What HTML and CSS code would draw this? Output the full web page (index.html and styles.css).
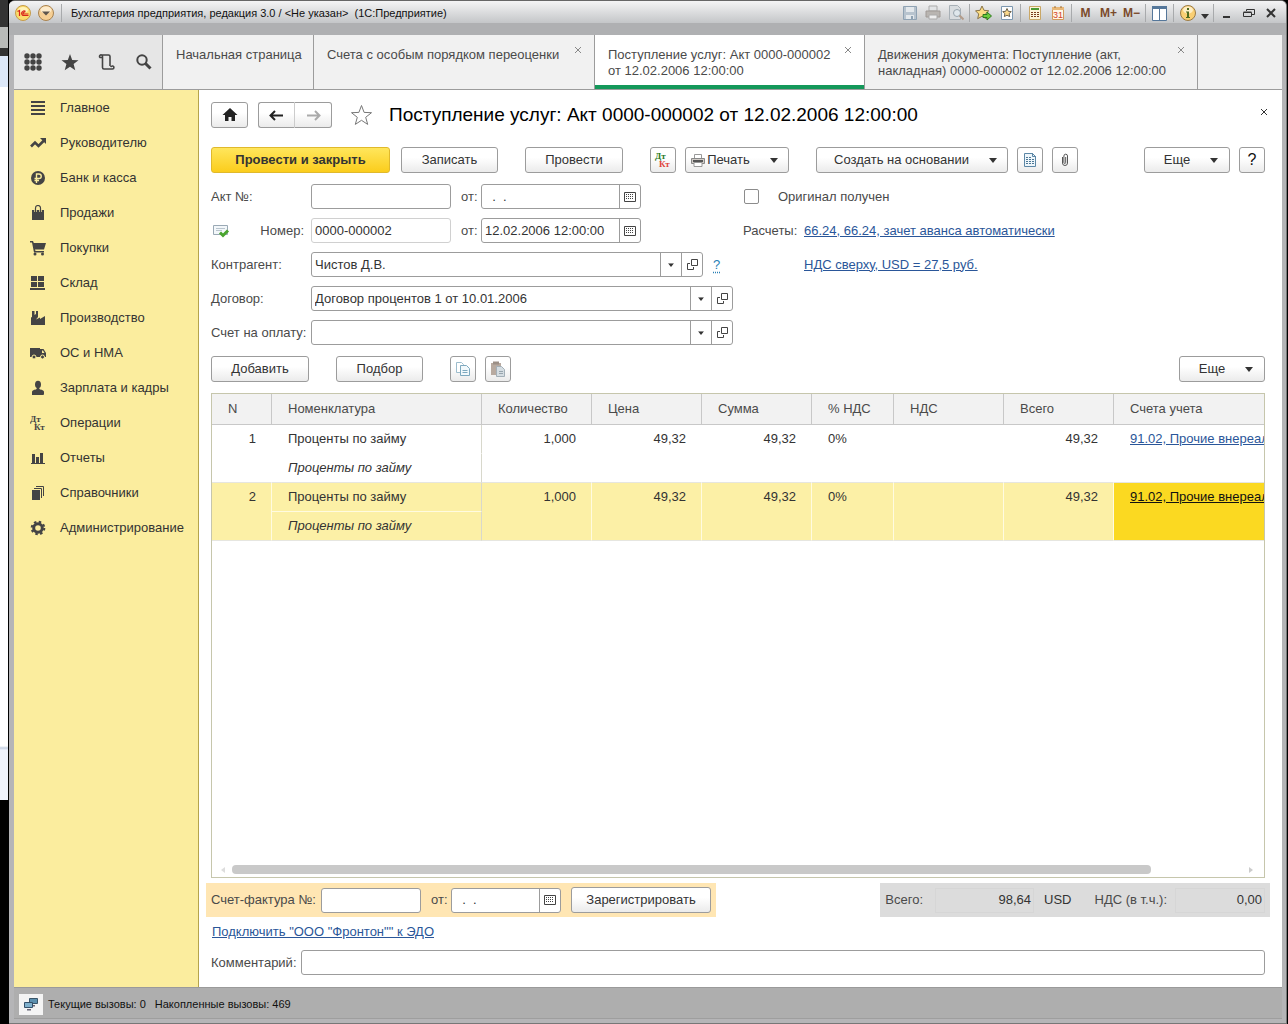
FILE: index.html
```html
<!DOCTYPE html>
<html lang="ru">
<head>
  <meta charset="UTF-8" />
  <meta name="viewport" content="width=device-width, initial-scale=1.0"/>
  <title>Поступление услуг: Акт 0000-000002</title>
  <link rel="stylesheet" href="styles.css">
</head>
<body>

  <!-- shared icons -->
  <svg class="defs" width="0" height="0">
    <symbol id="calendar" viewBox="0 0 12 10">
      <path d="M.5.5h11v9H.5z" fill="none" stroke="#444"/>
      <path d="M2 2.500h8M2 4.500h8M2 6.500h8" stroke="#444" stroke-dasharray="1 1" fill="none"/>
    </symbol>
    <symbol id="open" viewBox="0 0 11 11">
      <path d="M4.500.500h6v6h-6zM3 4.500H.500v6h6V8" fill="none" stroke="#444"/>
    </symbol>
    <symbol id="caret" viewBox="0 0 8 5"><path d="M0 0h8L4 5z" fill="#333"/></symbol>
    <symbol id="close" viewBox="0 0 8 8"><path d="M1 1l6 6M7 1L1 7" stroke="currentColor" fill="none"/></symbol>
  </svg>

  <div class="desktop">
    <div class="desktop-dark"></div>
    <div class="desktop-page"></div>
  </div>

  <div class="window">
    <header class="titlebar">
      <div class="titlebar-top">
        <svg class="app-logo" width="16" height="16" viewBox="0 0 16 16">
          <circle cx="8" cy="8" r="7.500" fill="#fbdc6c" stroke="#c49a4a"/>
          <ellipse cx="8" cy="5" rx="5" ry="3" fill="#fff3b8"/>
          <path d="M2.500 6.500L4.500 5.500V11M10.500 6.500A2.300 2.300 0 1 0 9 10.500H13.500M10 7.500A1 1 0 1 0 9 9H13.500" fill="none" stroke="#d8261c" stroke-width="1.200"/>
        </svg>
        <button class="round-menu" aria-label="Главное меню">
          <svg width="16" height="16" viewBox="0 0 16 16">
            <circle cx="8" cy="8" r="7.500" fill="#f6cf94" stroke="#a7824f"/>
            <ellipse cx="8" cy="5" rx="5.500" ry="3.500" fill="#fdebcb"/>
            <path d="M4 6.500h8l-4 4z" fill="#5d554c"/>
          </svg>
        </button>
        <span class="sep"></span>
        <div class="window-title">Бухгалтерия предприятия, редакция 3.0 / &lt;Не указан&gt;&nbsp; (1С:Предприятие)</div>
        <div class="title-tools">
          <button aria-label="Сохранить"><svg width="16" height="16" viewBox="0 0 16 16"><path d="M1.500 1.500h13v13h-13z" fill="#b7c3ce" stroke="#8fa2b3"/><path d="M4 2h8v5H4zM4 10h8v4H4z" fill="#e3e8ec"/><path d="M9 11h2v3H9z" fill="#8fa2b3"/></svg></button>
          <button aria-label="Печать"><svg width="16" height="16" viewBox="0 0 16 16"><path d="M4 1h8v5H4z" fill="#e2e4e6" stroke="#aaa"/><path d="M1 6h14v6H1z" fill="#b9b5b1" stroke="#a09a96"/><path d="M4 10h8v4H4z" fill="#eee" stroke="#aaa"/></svg></button>
          <button aria-label="Просмотр"><svg width="16" height="16" viewBox="0 0 16 16"><path d="M1.500.500h8l3 3v11h-11z" fill="#d9dde0" stroke="#a8b0b6"/><circle cx="9" cy="8" r="3.500" fill="#dfe7ec" stroke="#98a4ad"/><path d="M11.500 10.500l4 4" stroke="#b39c8a" stroke-width="2"/></svg></button>
          <span class="sep"></span>
          <button aria-label="Добавить в избранное"><svg width="17" height="16" viewBox="0 0 17 16"><path d="M7 1l2 4.300 4.800.500-3.500 3.200 1 4.700L7 11.300 2.700 13.700l1-4.700L.500 5.800 5 5.300z" fill="#fbdc83" stroke="#8a7448"/><path d="M8 9.500h4V7l4.500 4-4.500 4v-2.500H8z" fill="#6ccc3c" stroke="#2d7a1c"/></svg></button>
          <button aria-label="Избранное"><svg width="14" height="16" viewBox="0 0 14 16"><path d="M1.500 1.500h11v13h-11z" fill="#fdfdfd" stroke="#7d98b0"/><path d="M7 3.500l1.300 2.800 3 .300-2.200 2 .600 3L7 10.200l-2.700 1.400.600-3-2.200-2 3-.300z" fill="#fbd98b" stroke="#6f654e"/></svg></button>
          <span class="sep"></span>
          <button aria-label="Калькулятор"><svg width="14" height="16" viewBox="0 0 14 16"><path d="M1.500 1.500h11v13h-11z" fill="#fdf3d8" stroke="#c9a766"/><path d="M3 3h8v2H3z" fill="#4b9a34"/><path d="M3 7.500h8M3 9.500h8M3 11.500h8" stroke="#7a3b1d" stroke-dasharray="2 1"/></svg></button>
          <button aria-label="Календарь"><svg width="14" height="16" viewBox="0 0 14 16"><path d="M1.500 2.500h11v12h-11z" fill="#fff7e6" stroke="#d19a5a"/><path d="M1 2h12v3H1z" fill="#e9b878"/><path d="M4 1v2M10 1v2" stroke="#9b6a30"/><text x="7" y="13" class="cal-num">31</text></svg></button>
          <span class="sep"></span>
          <button class="mem">M</button>
          <button class="mem">M+</button>
          <button class="mem">M−</button>
          <span class="sep"></span>
          <button aria-label="Панели"><svg width="15" height="15" viewBox="0 0 15 15"><path d="M.500.500h14v14H.500z" fill="#fff" stroke="#55779a"/><path d="M0 0h15v3H0z" fill="#55779a"/><path d="M7.500 3v12" stroke="#55779a"/></svg></button>
          <span class="sep"></span>
          <button aria-label="О программе"><svg width="16" height="16" viewBox="0 0 16 16"><circle cx="8" cy="8" r="7.500" fill="#f9cf74" stroke="#9b7b45"/><ellipse cx="8" cy="5" rx="5" ry="3.500" fill="#feeec4"/><path d="M7 3h2v2H7zM6 6.500h3V12h1v1H6v-1h1V7.500H6z" fill="#4f6b1f"/></svg></button>
          <button class="narrow" aria-label="Ещё"><svg class="low" width="8" height="5"><use href="#caret"/></svg></button>
          <span class="sep"></span>
          <button class="win" aria-label="Свернуть"><svg width="12" height="12" viewBox="0 0 12 12"><path d="M2 9h7v2H2z" fill="#333"/></svg></button>
          <button class="win" aria-label="Восстановить"><svg width="12" height="12" viewBox="0 0 12 12"><path d="M3.500 4V2.500h8v5H9M.500 5.500h8v4h-8zM.500 5h8" fill="none" stroke="#333"/></svg></button>
          <button class="win" aria-label="Закрыть"><svg width="12" height="12" viewBox="0 0 12 12"><path d="M2 2l8 8M10 2l-8 8" stroke="#333" stroke-width="2"/></svg></button>
        </div>
      </div>
    </header>

    <div class="frame">
      <nav class="tabs">
        <div class="tab-tools">
          <button aria-label="Меню функций"><svg width="18" height="18" viewBox="0 0 18 18" fill="#444"><circle cx="3" cy="3" r="2.700"/><circle cx="9" cy="3" r="2.700"/><circle cx="15" cy="3" r="2.700"/><circle cx="3" cy="9" r="2.700"/><circle cx="9" cy="9" r="2.700"/><circle cx="15" cy="9" r="2.700"/><circle cx="3" cy="15" r="2.700"/><circle cx="9" cy="15" r="2.700"/><circle cx="15" cy="15" r="2.700"/></svg></button>
          <button aria-label="Избранное"><svg width="18" height="18" viewBox="0 0 18 18"><path d="M9 1l2.200 5.900 6.300.300-4.900 3.900 1.700 6.100L9 13.700l-5.300 3.500 1.700-6.100L.500 7.200l6.300-.300z" fill="#444"/></svg></button>
          <button aria-label="История"><svg width="18" height="18" viewBox="0 0 18 18"><path d="M4.500 6V3.500A1.500 1.500 0 1 0 2 4.500h2.500M3 2h7.500a1.500 1.500 0 0 1 1.500 1.500V13M4.500 6v8.500A1.500 1.500 0 0 0 6 16h8.500A1.500 1.500 0 1 0 13 14v-1" fill="none" stroke="#444" stroke-width="1.600"/></svg></button>
          <button aria-label="Поиск"><svg width="18" height="18" viewBox="0 0 18 18"><circle cx="7" cy="7" r="4.700" fill="none" stroke="#444" stroke-width="2"/><path d="M10.500 10.500l5 5" stroke="#444" stroke-width="3"/></svg></button>
        </div>
        <div class="tab tab-home">Начальная страница</div>
        <div class="tab tab-rates">Счета с особым порядком переоценки
          <button class="tab-close" aria-label="Закрыть"><svg width="8" height="8"><use href="#close"/></svg></button>
        </div>
        <div class="tab tab-act active">Поступление услуг: Акт 0000-000002<br>от 12.02.2006 12:00:00
          <button class="tab-close" aria-label="Закрыть"><svg width="8" height="8"><use href="#close"/></svg></button>
        </div>
        <div class="tab tab-moves">Движения документа: Поступление (акт,<br>накладная) 0000-000002 от 12.02.2006 12:00:00
          <button class="tab-close" aria-label="Закрыть"><svg width="8" height="8"><use href="#close"/></svg></button>
        </div>
      </nav>

      <div class="workspace">
        <aside class="sidebar">
          <a href="#"><svg viewBox="0 0 16 16"><path d="M1 1h14v2H1zM1 5h14v2H1zM1 9h14v2H1zM1 13h14v2H1z"/></svg>Главное</a>
          <a href="#"><svg viewBox="0 0 16 16"><path d="M1 11.500l4-4 3.500 3.500L14 5.500" fill="none" stroke="#444" stroke-width="2.600"/><path d="M10 3h6v6z"/></svg>Руководителю</a>
          <a href="#"><svg viewBox="0 0 16 16"><circle cx="8" cy="8" r="7"/><path d="M6.500 13V4H9a2.200 2.200 0 0 1 0 4.500H4.500M4.500 10.500H9" fill="none" stroke="#fbed9e" stroke-width="1.400"/></svg>Банк и касса</a>
          <a href="#"><svg viewBox="0 0 16 16"><path d="M2 5h12v10H2z"/><path d="M5.500 7V3.500a2.500 2.500 0 0 1 5 0V7" fill="none" stroke="#fbed9e" stroke-width="2.500"/><path d="M5.500 7V3a2.500 2.500 0 0 1 5 0v4" fill="none" stroke="#444" stroke-width="1.200"/></svg>Продажи</a>
          <a href="#"><svg viewBox="0 0 16 16"><path d="M0 1h3l.800 2H16l-2 6.500H5l.500 1.500H14v1.500H4L2 2.500H0z"/><circle cx="5" cy="14" r="1.500"/><circle cx="12.500" cy="14" r="1.500"/></svg>Покупки</a>
          <a href="#"><svg viewBox="0 0 16 16"><path d="M1 1h6v5H1zM8 1h6v5H8zM1 7h6v5H1zM8 7h6v5H8zM0 13h15v2H0z"/></svg>Склад</a>
          <a href="#"><svg viewBox="0 0 16 16"><path d="M1 15V7.500L2 7V1h2.500v4L6 4V1h2v6l-2 2.500 4-2V9l5-3v9z"/></svg>Производство</a>
          <a href="#"><svg viewBox="0 0 16 16"><path d="M0 3h10v9H0z"/><path d="M10 4h3.500L16 8v4h-6z"/><path d="M12 5.500h1L14.500 8H12z" fill="#fbed9e"/><circle cx="4" cy="12" r="2" stroke="#fbed9e"/><circle cx="12.500" cy="12" r="2" stroke="#fbed9e"/></svg>ОС и НМА</a>
          <a href="#"><svg viewBox="0 0 16 16"><ellipse cx="8" cy="4.500" rx="3" ry="3.800"/><path d="M2 15v-3q0-2 4-2.500l1-1.500h2l1 1.500q4 .500 4 2.500v2q0 1-1 1z"/></svg>Зарплата и кадры</a>
          <a href="#"><svg viewBox="0 0 16 16"><text x="0" y="7" class="dtkt">Дт</text><text x="4" y="15" class="dtkt">Кт</text></svg>Операции</a>
          <a href="#"><svg viewBox="0 0 16 16"><path d="M1 13h14v1H1zM2 4h3v9H2zM6 7h3v6H6zM10 3h3v10h-3z"/></svg>Отчеты</a>
          <a href="#"><svg viewBox="0 0 16 16"><path d="M2 5h8v10H2z"/><path d="M4 3.500h7.500V13M6 1.500h7.500V11" fill="none" stroke="#444"/></svg>Справочники</a>
          <a href="#"><svg viewBox="0 0 16 16"><circle cx="8" cy="8" r="4.300" fill="none" stroke="#444" stroke-width="3"/><circle cx="8" cy="8" r="6.300" fill="none" stroke="#444" stroke-width="2" stroke-dasharray="2.500 2.450"/></svg>Администрирование</a>
        </aside>

        <main class="content">
          <div class="heading">
            <button class="btn home" aria-label="Домой"><svg width="16" height="14" viewBox="0 0 16 14"><path d="M8 0l7.500 7H13v6H9.500V9h-3v4H3V7H.500z" fill="#222"/></svg></button>
            <div class="history">
              <button class="btn" aria-label="Назад"><svg width="15" height="11" viewBox="0 0 15 11"><path d="M14 5.500H2M6 1L1.500 5.500 6 10" fill="none" stroke="#222" stroke-width="2"/></svg></button>
              <button class="btn" aria-label="Вперед"><svg width="15" height="11" viewBox="0 0 15 11"><path d="M1 5.500h12M9 1l4.500 4.500L9 10" fill="none" stroke="#aaa" stroke-width="2"/></svg></button>
            </div>
            <button class="star" aria-label="В избранное"><svg width="23" height="22" viewBox="0 0 23 22"><path d="M11.500 1.500l2.600 6.900 7.400.300-5.800 4.600 2 7.100-6.200-4.100-6.200 4.100 2-7.100L1.500 8.700l7.400-.300z" fill="none" stroke="#777"/></svg></button>
            <h1>Поступление услуг: Акт 0000-000002 от 12.02.2006 12:00:00</h1>
            <button class="page-close" aria-label="Закрыть"><svg width="8" height="8"><use href="#close"/></svg></button>
          </div>

          <div class="toolbar">
            <div class="group">
              <button class="btn primary">Провести и закрыть</button>
              <button class="btn write">Записать</button>
            </div>
            <button class="btn medium">Провести</button>
            <div class="group">
              <button class="btn square" aria-label="Проводки"><svg width="18" height="18" viewBox="0 0 18 18"><text x="1" y="8" class="dtkt dt">Дт</text><text x="5" y="16" class="dtkt kt">Кт</text></svg></button>
              <button class="btn print"><svg width="14" height="13" viewBox="0 0 14 13"><path d="M3.500.500h7v4h-7z" fill="#fff" stroke="#999"/><path d="M.500 4.500h13v5H.500z" fill="#d0cbc6" stroke="#888"/><path d="M2 6h10v2H2z" fill="#555"/><path d="M3 8.500h8v4H3z" fill="#fff" stroke="#999"/></svg>Печать<svg class="caret" width="8" height="5"><use href="#caret"/></svg></button>
            </div>
            <div class="group">
              <button class="btn based">Создать на основании<svg class="caret" width="8" height="5"><use href="#caret"/></svg></button>
              <button class="btn square" aria-label="Отчет"><svg width="12" height="14" viewBox="0 0 12 14"><path d="M.500.500h8l3 3v10H.500z" fill="#eef6fb" stroke="#5c87a6"/><path d="M8.500 0v3.500H12" fill="none" stroke="#5c87a6"/><path d="M2 4.500h5M2 6.500h8M2 8.500h8M2 10.500h8" stroke="#4d7795" stroke-dasharray="2 1"/></svg></button>
              <button class="btn square" aria-label="Файлы"><svg width="8" height="14" viewBox="0 0 8 14"><path d="M1.500 4v6a2.500 2.500 0 0 0 5 0V3a1.800 1.800 0 0 0-3.600 0v6.500a.900.900 0 0 0 1.800 0V4" fill="none" stroke="#555"/></svg></button>
            </div>
            <div class="group right">
              <button class="btn more">Еще<svg class="caret" width="8" height="5"><use href="#caret"/></svg></button>
              <button class="btn square help">?</button>
            </div>
          </div>

          <div class="form">
            <div class="row">
              <div class="left">
                <label class="label" for="act">Акт №:</label>
                <input class="field number" type="text" id="act">
                <label class="from" for="act-date">от:</label>
                <div class="field date"><input type="text" id="act-date" value="  .  ."><button aria-label="Календарь"><svg width="12" height="10"><use href="#calendar"/></svg></button></div>
              </div>
              <input type="checkbox" id="original"><label for="original">Оригинал получен</label>
            </div>
            <div class="row">
              <div class="left">
                <label class="label with-icon" for="doc-number">
                  <svg width="17" height="14" viewBox="0 0 17 14"><path d="M.500 1.500h14v9H.500z" fill="#f3f7fa" stroke="#9aa9b5"/><path d="M3 4.500h9M3 6.500h6" stroke="#b9c5ce"/><path d="M7 8.500l3 3 5-5" fill="none" stroke="#4aa52e" stroke-width="3"/></svg>
                  Номер:</label>
                <input class="field number readonly" type="text" id="doc-number" value="0000-000002" readonly>
                <label class="from" for="doc-date">от:</label>
                <div class="field date"><input type="text" id="doc-date" value="12.02.2006 12:00:00"><button aria-label="Календарь"><svg width="12" height="10"><use href="#calendar"/></svg></button></div>
              </div>
              <span class="calc-label">Расчеты:</span>
              <a href="#">66.24, 66.24, зачет аванса автоматически</a>
            </div>
            <div class="row">
              <div class="left">
                <label class="label" for="partner">Контрагент:</label>
                <div class="field combo partner">
                  <select id="partner"><option>Чистов Д.В.</option></select>
                  <span class="arrow"><svg width="6" height="4" viewBox="0 0 8 5"><use href="#caret"/></svg></span>
                  <button aria-label="Открыть"><svg width="11" height="11"><use href="#open"/></svg></button>
                </div>
                <a class="hint" href="#">?</a>
              </div>
              <span class="calc-label"></span>
              <a href="#">НДС сверху, USD = 27,5 руб.</a>
            </div>
            <div class="row">
              <label class="label" for="contract">Договор:</label>
              <div class="field combo">
                <select id="contract"><option>Договор процентов 1 от 10.01.2006</option></select>
                <span class="arrow"><svg width="6" height="4" viewBox="0 0 8 5"><use href="#caret"/></svg></span>
                <button aria-label="Открыть"><svg width="11" height="11"><use href="#open"/></svg></button>
              </div>
            </div>
            <div class="row">
              <label class="label" for="bill">Счет на оплату:</label>
              <div class="field combo">
                <select id="bill"><option></option></select>
                <span class="arrow"><svg width="6" height="4" viewBox="0 0 8 5"><use href="#caret"/></svg></span>
                <button aria-label="Открыть"><svg width="11" height="11"><use href="#open"/></svg></button>
              </div>
            </div>
          </div>

          <div class="toolbar table-tools">
            <button class="btn medium">Добавить</button>
            <button class="btn pick">Подбор</button>
            <div class="group">
              <button class="btn square" aria-label="Копировать"><svg width="14" height="14" viewBox="0 0 14 14"><path d="M.500.500h5l2 2v8h-7z" fill="#fff" stroke="#9dbdcd"/><path d="M4.500 3.500h6l3 3v7h-9z" fill="#f2f9fc" stroke="#7ea9bf"/><path d="M6.500 8.500h5M6.500 10.500h5" stroke="#7ea9bf"/></svg></button>
              <button class="btn square" aria-label="Вставить"><svg width="16" height="16" viewBox="0 0 16 16"><path d="M1 2h10v12H1z" fill="#b8aaa0"/><path d="M3 .500h6v3H3z" fill="#9c8f86"/><path d="M6.500 5.500h5l3 3v7h-8z" fill="#d5dde2" stroke="#a3afb7"/><path d="M9 10.500h4M9 12.500h4" stroke="#98a5ae"/></svg></button>
            </div>
            <div class="group right"><button class="btn more">Еще<svg class="caret" width="8" height="5"><use href="#caret"/></svg></button></div>
          </div>

          <div class="grid">
            <table>
              <colgroup><col class="c-n"><col class="c-name"><col class="c-num"><col class="c-num"><col class="c-num"><col class="c-vat"><col class="c-num"><col class="c-num"><col></colgroup>
              <thead>
                <tr><th>N</th><th>Номенклатура</th><th>Количество</th><th>Цена</th><th>Сумма</th><th>% НДС</th><th>НДС</th><th>Всего</th><th>Счета учета</th></tr>
              </thead>
              <tbody>
                <tr>
                  <td class="num" rowspan="2">1</td><td class="name">Проценты по займу</td><td class="num" rowspan="2">1,000</td><td class="num" rowspan="2">49,32</td><td class="num" rowspan="2">49,32</td><td rowspan="2">0%</td><td rowspan="2"></td><td class="num" rowspan="2">49,32</td><td class="account" rowspan="2"><a href="#">91.02, Прочие внереал</a></td>
                </tr>
                <tr><td class="name full">Проценты по займу</td></tr>
              </tbody>
              <tbody class="selected">
                <tr>
                  <td class="num" rowspan="2">2</td><td class="name">Проценты по займу</td><td class="num" rowspan="2">1,000</td><td class="num" rowspan="2">49,32</td><td class="num" rowspan="2">49,32</td><td rowspan="2">0%</td><td rowspan="2"></td><td class="num" rowspan="2">49,32</td><td class="account current" rowspan="2"><a href="#">91.02, Прочие внереал</a></td>
                </tr>
                <tr><td class="name full">Проценты по займу</td></tr>
              </tbody>
            </table>
            <div class="scrollbar">
              <svg width="4" height="6" viewBox="0 0 4 6"><path d="M4 0v6L0 3z" fill="#ddd"/></svg>
              <div class="track"><div class="thumb"></div></div>
              <svg width="4" height="6" viewBox="0 0 4 6"><path d="M0 0v6l4-3z" fill="#ccc"/></svg>
            </div>
          </div>

          <div class="footer">
            <div class="invoice">
              <label for="invoice">Счет-фактура №:</label>
              <input class="field invoice-number" type="text" id="invoice">
              <label class="from" for="invoice-date">от:</label>
              <div class="field date short"><input type="text" id="invoice-date" value="  .  ."><button aria-label="Календарь"><svg width="12" height="10"><use href="#calendar"/></svg></button></div>
              <button class="btn register">Зарегистрировать</button>
            </div>
            <div class="totals">
              <label for="total">Всего:</label>
              <output class="total" id="total">98,64</output>
              <span class="currency">USD</span>
              <label for="vat">НДС (в т.ч.):</label>
              <output class="vat" id="vat">0,00</output>
            </div>
          </div>
          <div class="edo"><a href="#">Подключить "ООО "Фронтон"" к ЭДО</a></div>
          <div class="comment">
            <label for="comment">Комментарий:</label>
            <input class="field" type="text" id="comment">
          </div>
        </main>
      </div>
    </div>

    <footer class="statusbar">
      <button aria-label="Вызовы сервера"><svg width="14" height="14" viewBox="0 0 14 14"><path d="M5.500 1.500h8v5h-8z" fill="#5b8fae" stroke="#3a5568"/><path d="M8 8h3v1.500H8z" fill="#667"/><path d="M.500 5.500h8v5h-8z" fill="#7fb0cc" stroke="#34506a"/><path d="M3 12h4v1.500H3z" fill="#667"/></svg></button>
      <span>Текущие вызовы: 0</span>
      <span>Накопленные вызовы: 469</span>
    </footer>
  </div>

</body>
</html>
```
FILE: styles.css
```css
* {
  box-sizing: border-box;
}
body {
  margin: 0;
  display: flex;
  min-height: 100vh;
  padding-right: 1px;
  background-color: #000;
  font-family: "Liberation Sans", Arial, sans-serif;
  font-size: 13px;
  line-height: 16px;
  color: #4a4a4a;
}
.defs {
  position: absolute;
}
button, input, select {
  font: inherit;
  color: #333;
  margin: 0;
}
button {
  padding: 0;
  border: none;
  background: none;
  display: flex;
  align-items: center;
  justify-content: center;
}
a {
  color: #2a5699;
}

/* what is left of the desktop beside the window */
.desktop {
  width: 9px;
  border-right: 1px solid #000;
}
.desktop-dark {
  height: 56px;
  background: linear-gradient(#333 27px, #b9bbb9 27px, #b9bbb9 48px, #333 48px);
}
.desktop-page {
  height: 744px;
  background: linear-gradient(#dde8f8 31px, #fff 31px, #fff 690px, #c5d0e0 692px, #eff3fc 694px);
}

.window {
  flex: 1;
  min-width: 0;
  display: flex;
  flex-direction: column;
  background-color: #b5b5b7;
  border-top: 1px solid #666;
  border-bottom: 1px solid #777;
  border-right: 1px solid #777;
  border-radius: 6px 6px 0 0;
  overflow: hidden;
}

/* title bar */
.titlebar {
  height: 34px;
  background-color: #afb0b2;
}
.titlebar-top {
  display: flex;
  align-items: center;
  height: 22px;
  padding: 2px 4px 0 6px;
  background: linear-gradient(#f4f4f5, #c4c6c8);
}
.round-menu {
  margin: 0 5px 0 7px;
}
.sep {
  width: 1px;
  height: 18px;
  margin: 0 2px;
  background-color: #a8aaac;
}
.window-title {
  flex: 1;
  padding-left: 7px;
  font-size: 11px;
  color: #111;
  white-space: nowrap;
}
.title-tools {
  display: flex;
  align-items: center;
}
.title-tools button {
  width: 23px;
  height: 20px;
}
.title-tools .narrow {
  width: 12px;
}
.title-tools .win {
  width: 22px;
}
.title-tools .mem {
  font-size: 12px;
  font-weight: bold;
  color: #7b4a2b;
}
.low {
  margin-top: 6px;
}
.cal-num {
  font-size: 9px;
  fill: #d2402c;
  text-anchor: middle;
}

.frame {
  flex: 1;
  display: flex;
  flex-direction: column;
  margin: 0 4px 0 5px;
}

/* tabs */
.tabs {
  display: flex;
  height: 55px;
  background-color: #f1f1f1;
  border-bottom: 1px solid #9c9c9c;
}
.tab-tools {
  display: flex;
  align-items: center;
  gap: 19px;
  padding: 0 10px;
  width: 149px;
  background-color: #e6e6e6;
  border-right: 1px solid #9c9c9c;
}
.tab {
  position: relative;
  padding: 12px 13px 0;
  border-right: 1px solid #9c9c9c;
  white-space: nowrap;
}
.tab-home {
  width: 151px;
}
.tab-rates {
  width: 281px;
}
.tab-act {
  width: 270px;
}
.tab-moves {
  width: 333px;
}
.tab.active {
  background: linear-gradient(#14985a, #14985a) bottom / 100% 4px no-repeat #fff;
}
.tab-close {
  position: absolute;
  top: 11px;
  right: 12px;
  color: #888;
}

.workspace {
  flex: 1;
  display: flex;
  background-color: #fff;
}
.sidebar {
  width: 185px;
  flex-shrink: 0;
  background-color: #fbed9e;
  border-right: 1px solid #b5a44c;
}
.sidebar a {
  display: flex;
  align-items: center;
  gap: 14px;
  height: 35px;
  padding-left: 16px;
  color: #333;
  text-decoration: none;
}
.sidebar svg {
  width: 16px;
  height: 16px;
  fill: #444;
}
.dtkt {
  font-family: "Liberation Serif", serif;
  font-size: 9px;
  font-weight: bold;
}
.dt {
  fill: #2c7a1e;
}
.kt {
  fill: #e0443c;
}

/* document form */
.content {
  flex: 1;
  min-width: 0;
  display: flex;
  flex-direction: column;
  padding: 12px 17px 12px 12px;
}
.btn {
  height: 26px;
  border: 1px solid #9c9c9c;
  border-radius: 3px;
  background: linear-gradient(#fff 40%, #ebebeb);
  white-space: nowrap;
}
.heading {
  display: flex;
  align-items: center;
  height: 26px;
}
.home {
  width: 37px;
}
.history {
  display: flex;
  margin: 0 18px 0 10px;
}
.history .btn {
  width: 37px;
  border-right-color: #ccc;
  border-radius: 3px 0 0 3px;
}
.history .btn + .btn {
  border-left: none;
  border-right-color: #9c9c9c;
  border-radius: 0 3px 3px 0;
}
h1 {
  flex: 1;
  margin: 0 0 0 16px;
  font-size: 19px;
  font-weight: normal;
  line-height: 24px;
  color: #000;
}
.page-close {
  align-self: flex-start;
  margin-top: 6px;
  margin-right: -3px;
  color: #333;
}
.toolbar {
  display: flex;
  gap: 27px;
  margin: 19px 0 11px;
}
.toolbar.table-tools {
  margin-top: 11px;
}
.group {
  display: flex;
  gap: 9px;
}
.right {
  margin-left: auto;
}
.primary {
  width: 179px;
  margin-right: 2px;
  border-color: #e0b92c;
  background: linear-gradient(#ffe65c, #fbcd1c);
  font-weight: bold;
}
.write {
  width: 97px;
}
.medium {
  width: 98px;
}
.pick {
  width: 87px;
}
.square {
  width: 26px;
}
.print {
  width: 104px;
  gap: 2px;
  padding-right: 5px;
}
.print .caret {
  margin-left: 18px;
}
.based {
  width: 192px;
  padding-left: 7px;
}
.based .caret, .more .caret {
  margin-left: 20px;
}
.more {
  width: 86px;
  padding-left: 8px;
}
.help {
  font-size: 16px;
  color: #111;
}

.form {
  display: flex;
  flex-direction: column;
  gap: 9px;
}
.row {
  display: flex;
  align-items: center;
  height: 25px;
}
.left {
  display: flex;
  align-items: center;
  width: 532px;
}
.label {
  width: 100px;
  white-space: nowrap;
}
.with-icon {
  display: flex;
  justify-content: space-between;
  align-items: center;
  padding: 0 7px 0 2px;
}
.field {
  height: 25px;
  border: 1px solid #9c9c9c;
  border-radius: 3px;
  background-color: #fff;
  padding: 0 3px;
  outline: none;
}
.number {
  width: 140px;
}
.readonly {
  border-color: #d0d0d0;
}
.from {
  width: 30px;
  padding-left: 10px;
}
.date {
  display: flex;
  width: 160px;
  padding: 0;
}
.date input {
  flex: 1;
  min-width: 0;
  padding: 0 3px;
  border: none;
  background: none;
  outline: none;
  white-space: pre;
}
.date button, .combo button {
  width: 21px;
  border-left: 1px solid #9c9c9c;
}
.short {
  width: 110px;
}
.combo {
  display: grid;
  grid-template-columns: 1fr 21px 21px;
  width: 422px;
  padding: 0;
}
.partner {
  width: 392px;
}
.combo select {
  grid-area: 1 / 1 / 2 / 3;
  min-width: 0;
  padding: 0 3px;
  appearance: none;
  border: none;
  background: none;
  outline: none;
}
.arrow {
  grid-area: 1 / 2 / 2 / 3;
  display: flex;
  align-items: center;
  justify-content: center;
  border-left: 1px solid #9c9c9c;
  pointer-events: none;
}
.hint {
  margin-left: 10px;
  color: #2a7fb5;
  text-decoration: underline dotted;
  text-underline-offset: 3px;
}
input[type="checkbox"] {
  width: 15px;
  height: 15px;
  margin: 0 19px 0 1px;
  appearance: none;
  border: 1px solid #8c8c8c;
  border-radius: 2px;
  background-color: #fff;
}
.calc-label {
  width: 61px;
}

/* table part */
.grid {
  flex: 1;
  display: flex;
  flex-direction: column;
  justify-content: space-between;
  border: 1px solid #c6c6ac;
  overflow: hidden;
}
table {
  width: 100%;
  table-layout: fixed;
  border-collapse: separate;
  border-spacing: 0;
}
.c-n {
  width: 60px;
}
.c-name {
  width: 210px;
}
.c-num {
  width: 110px;
}
.c-vat {
  width: 82px;
}
th {
  height: 31px;
  padding: 0 0 0 16px;
  background-color: #f2f2f2;
  border-right: 1px solid #c8c8c8;
  border-bottom: 1px solid #c8c8c8;
  font-weight: normal;
  text-align: left;
}
th:last-child {
  border-right: none;
}
td {
  height: 29px;
  padding: 6px 15px 6px 16px;
  vertical-align: top;
  color: #333;
  white-space: nowrap;
  border-right: 1px solid transparent;
  border-bottom: 1px solid #e6e6e0;
}
.num {
  text-align: right;
}
.name {
  border-right-color: #d8d8cc;
  border-bottom-color: transparent;
}
.full {
  font-style: italic;
  border-bottom-color: #e6e6e0;
}
.account {
  padding-right: 0;
  border-right: none;
}
.selected td {
  background-color: #fcf0a6;
  border-right-color: #fffbe0;
}
.selected .name {
  border-right-color: #d8d8cc;
  border-bottom-color: #fffbe0;
}
.selected .full {
  border-bottom-color: #e6e6e0;
}
.selected .current {
  background-color: #fbd921;
}
.current a {
  color: #111;
}
.scrollbar {
  display: flex;
  align-items: center;
  gap: 7px;
  padding: 3px 11px 3px 9px;
}
.track {
  flex: 1;
}
.thumb {
  width: 91%;
  height: 9px;
  border-radius: 4px;
  background-color: #c9c9c9;
}

.footer {
  display: flex;
  justify-content: space-between;
  margin: 5px -5px 0;
}
.invoice, .totals {
  display: flex;
  align-items: center;
  height: 34px;
  padding: 0 5px;
  white-space: nowrap;
}
.invoice {
  background-color: #ffe6b3;
}
.invoice label:first-child {
  width: 110px;
}
.invoice-number {
  width: 100px;
}
.register {
  width: 140px;
  margin-left: 10px;
}
.totals {
  background-color: #dcdcdc;
}
.totals output {
  height: 25px;
  padding: 3px 2px 0;
  text-align: right;
  color: #333;
  border: 1px solid #d6d6d6;
}
.totals .total {
  width: 99px;
  margin-left: 12px;
}
.currency {
  margin: 0 23px 0 10px;
  color: #333;
}
.totals .vat {
  width: 90px;
  margin-left: 8px;
}
.edo {
  margin: 7px 0 0 1px;
}
.comment {
  display: flex;
  align-items: center;
  margin-top: 10px;
}
.comment label {
  width: 90px;
}
.comment .field {
  flex: 1;
}

.statusbar {
  display: flex;
  align-items: center;
  gap: 9px;
  height: 32px;
  margin: 0 4px 4px 5px;
  padding: 2px 5px 0;
  background-color: #aeaeae;
  border-top: 1px solid #9a9a9a;
  border-bottom: 1px solid #9e9e9e;
  font-size: 11px;
  color: #111;
}
.statusbar button {
  width: 24px;
  height: 21px;
  margin-right: -4px;
  background-color: #f4f4f4;
}
```
